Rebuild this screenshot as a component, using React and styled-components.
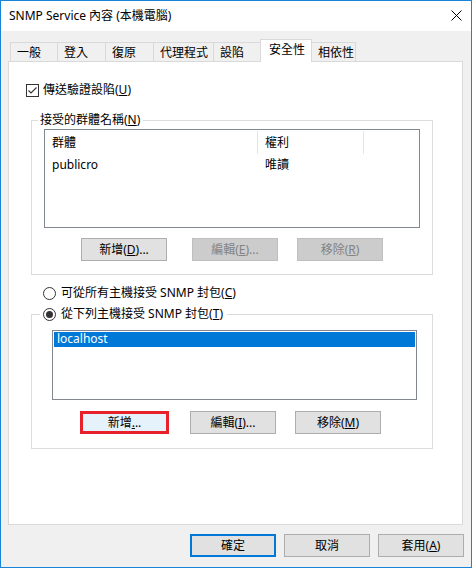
import styled, { createGlobalStyle } from 'styled-components';

const GlobalStyle = createGlobalStyle`
  html, body {
    margin: 0;
    padding: 0;
    background: #ffffff;
  }
  body {
    font-family: "Noto Sans", "Noto Sans CJK TC", sans-serif;
    font-size: 12px;
    color: #000000;
  }
  * {
    box-sizing: border-box;
  }
`;

const tabs = [
  { label: '一般', width: 48 },
  { label: '登入', width: 49 },
  { label: '復原', width: 49 },
  { label: '代理程式', width: 61 },
  { label: '設陷', width: 48 },
  { label: '安全性', width: 52, active: true },
  { label: '相依性', width: 45 },
];

function CloseIcon() {
  return (
    <svg width="11" height="11" viewBox="0 0 11 11">
      <path d="M0.5 0.5 L10.5 10.5 M10.5 0.5 L0.5 10.5" stroke="#000" strokeWidth="1" fill="none" />
    </svg>
  );
}

function Key({ children }) {
  return <U>{children}</U>;
}

function App() {
  return (
    <>
      <GlobalStyle />
      <Window>
        <TitleBar>
          <Title>SNMP Service 內容 (本機電腦)</Title>
          <CloseButton>
            <CloseIcon />
          </CloseButton>
        </TitleBar>

        <Body>
          <TabStrip>
            {tabs.map((t) => (
              <Tab key={t.label} $width={t.width} $active={t.active}>
                {t.label}
              </Tab>
            ))}
          </TabStrip>

          <Panel>
            <CheckRow>
              <CheckBox>
                <svg width="11" height="11" viewBox="0 0 11 11">
                  <path d="M1.5 5.5 L4 8 L9.5 2.5" stroke="#333" strokeWidth="1.1" fill="none" />
                </svg>
              </CheckBox>
              <span>
                傳送驗證設陷(<Key>U</Key>)
              </span>
            </CheckRow>

            <Group $mt={16} $pad="2px 12px 13px 12px">
              <Legend>
                接受的群體名稱(<Key>N</Key>)
              </Legend>
              <ListView>
                <HeaderRow>
                  <HeaderCell $width={213}>群體</HeaderCell>
                  <HeaderCell $width={106}>權利</HeaderCell>
                </HeaderRow>
                <DataRow>
                  <DataCell $width={213}>publicro</DataCell>
                  <DataCell $width={106}>唯讀</DataCell>
                </DataRow>
              </ListView>
              <ButtonRow $mt={10} $pl={37}>
                <Button>
                  新增(<Key>D</Key>)...
                </Button>
                <Button $ml={25} disabled>
                  編輯(<Key>E</Key>)...
                </Button>
                <Button $ml={19} disabled>
                  移除(<Key>R</Key>)
                </Button>
              </ButtonRow>
            </Group>

            <RadioRow>
              <Radio />
              <span>
                可從所有主機接受 SNMP 封包(<Key>C</Key>)
              </span>
            </RadioRow>

            <Group $mt={7} $pad="9px 15px 14px 20px">
              <RadioLegend>
                <Radio $checked />
                <span>
                  從下列主機接受 SNMP 封包(<Key>T</Key>)
                </span>
              </RadioLegend>
              <ListBox>
                <ListItem $selected>localhost</ListItem>
              </ListBox>
              <ButtonRow $mt={11} $pl={28}>
                <Button $marked $width={89}>
                  新增<Key>.</Key>..
                </Button>
                <Button $ml={21}>
                  編輯(<Key>I</Key>)...
                </Button>
                <Button $ml={19}>
                  移除(<Key>M</Key>)
                </Button>
              </ButtonRow>
            </Group>
          </Panel>

          <Footer>
            <Button $primary>確定</Button>
            <Button>取消</Button>
            <Button>
              套用(<Key>A</Key>)
            </Button>
          </Footer>
        </Body>
      </Window>
    </>
  );
}

const Window = styled.div`
  display: flex;
  flex-direction: column;
  width: 472px;
  height: 568px;
  border: 1px solid #1883d7;
  background: #f0f0f0;
`;

const TitleBar = styled.div`
  display: flex;
  align-items: center;
  justify-content: space-between;
  height: 30px;
  padding: 0 9px 0 8px;
  background: #ffffff;
`;

const Title = styled.div`
  line-height: 16px;
`;

const CloseButton = styled.div`
  display: flex;
  align-items: center;
  margin-top: -1px;
`;

const Body = styled.div`
  flex: 1;
  display: flex;
  flex-direction: column;
  padding: 8px 8px 0 7px;
`;

const TabStrip = styled.div`
  display: flex;
  align-items: flex-end;
  height: 23px;
  margin-left: 2px;
  margin-bottom: -1px;
  position: relative;
  z-index: 1;
`;

const Tab = styled.div`
  width: ${(p) => p.$width}px;
  height: ${(p) => (p.$active ? 23 : 20)}px;
  margin-right: -1px;
  padding: ${(p) => (p.$active ? '2px 0 0 8px' : '2px 0 0 6px')};
  border: 1px solid #d9d9d9;
  border-bottom: ${(p) => (p.$active ? 'none' : '1px solid #d9d9d9')};
  background: ${(p) => (p.$active ? '#ffffff' : '#f0f0f0')};
  line-height: 15px;
  white-space: nowrap;
  position: relative;
  z-index: ${(p) => (p.$active ? 2 : 1)};
`;

const Panel = styled.div`
  display: flex;
  flex-direction: column;
  height: 464px;
  background: #ffffff;
  border: 1px solid #d9d9d9;
`;

const CheckRow = styled.label`
  display: flex;
  align-items: center;
  gap: 4px;
  height: 14px;
  margin-top: 21px;
  padding-left: 17px;
  line-height: 14px;
`;

const CheckBox = styled.span`
  display: flex;
  align-items: center;
  justify-content: center;
  width: 13px;
  height: 13px;
  border: 1px solid #333333;
  background: #ffffff;
`;

const U = styled.span`
  text-decoration: underline;
  text-underline-offset: 1px;
`;

const Group = styled.fieldset`
  width: 402px;
  min-inline-size: 0;
  margin: ${(p) => p.$mt}px 0 0 22px;
  padding: ${(p) => p.$pad};
  border: 1px solid #dcdcdc;
`;

const Legend = styled.legend`
  margin-left: -6px;
  padding: 0 3px 0 2px;
  line-height: 14px;
`;

const RadioLegend = styled.legend`
  display: flex;
  align-items: center;
  gap: 5px;
  margin-left: -12px;
  padding: 0 4px 0 3px;
  line-height: 14px;
`;

const ListView = styled.div`
  height: 99px;
  border: 1px solid #828790;
  background: #ffffff;
`;

const HeaderRow = styled.div`
  display: flex;
  height: 25px;
  align-items: center;
`;

const HeaderCell = styled.div`
  width: ${(p) => p.$width}px;
  height: 23px;
  padding-left: 7px;
  line-height: 23px;
  border-right: 1px solid #e5e5e5;
`;

const DataRow = styled.div`
  display: flex;
  height: 19px;
  align-items: center;
`;

const DataCell = styled.div`
  width: ${(p) => p.$width}px;
  padding-left: 7px;
  line-height: 16px;
`;

const ButtonRow = styled.div`
  display: flex;
  align-items: center;
  margin-top: ${(p) => p.$mt}px;
  padding-left: ${(p) => p.$pl}px;
`;

const Button = styled.button`
  width: ${(p) => p.$width || 86}px;
  height: 23px;
  margin-left: ${(p) => p.$ml || 0}px;
  padding: 0;
  font-family: inherit;
  font-size: 12px;
  line-height: 14px;
  color: #000000;
  background: #e1e1e1;
  border: 1px solid #adadad;
  border-radius: 0;

  ${(p) =>
    p.$primary &&
    `
    border: 2px solid #0078d7;
  `}

  ${(p) =>
    p.$marked &&
    `
    background: #e5f1fb;
    border: 3px solid #e8202a;
  `}

  &:disabled {
    color: #838383;
    background: #cccccc;
    border-color: #bfbfbf;
  }
`;

const RadioRow = styled.label`
  display: flex;
  align-items: center;
  gap: 5px;
  height: 14px;
  margin-top: 11px;
  padding-left: 34px;
  line-height: 14px;
`;

const Radio = styled.span`
  display: flex;
  align-items: center;
  justify-content: center;
  width: 13px;
  height: 13px;
  border: 1px solid #333333;
  border-radius: 50%;
  background: #ffffff;

  &::after {
    content: '';
    display: ${(p) => (p.$checked ? 'block' : 'none')};
    width: 7px;
    height: 7px;
    border-radius: 50%;
    background: #333333;
  }
`;

const ListBox = styled.div`
  height: 70px;
  padding: 1px;
  border: 1px solid #828790;
  background: #ffffff;
`;

const ListItem = styled.div`
  height: 15px;
  padding-left: 3px;
  line-height: 14px;
  color: ${(p) => (p.$selected ? '#ffffff' : '#000000')};
  background: ${(p) => (p.$selected ? '#0078d7' : 'transparent')};
`;

const Footer = styled.div`
  display: flex;
  justify-content: flex-end;
  gap: 8px;
  margin-top: 9px;
  margin-right: -1px;
`;

export default App;
